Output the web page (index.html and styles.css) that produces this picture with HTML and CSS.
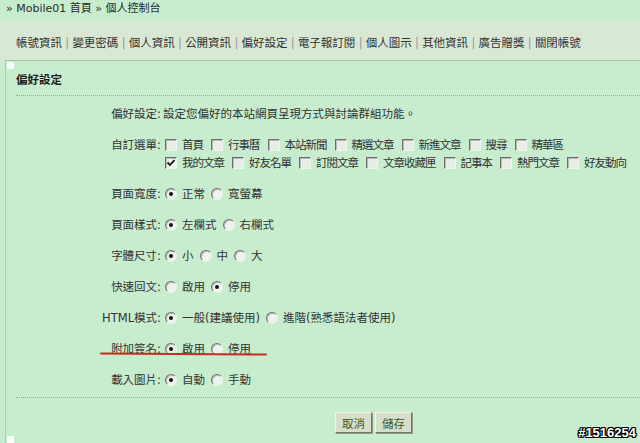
FILE: index.html
```html
<!DOCTYPE html>
<html lang="zh-Hant">
<head>
<meta charset="utf-8">
<title>偏好設定</title>
<link rel="stylesheet" href="styles.css">
</head>
<body>
<div class="crumb">» Mobile01 首頁 » 個人控制台</div>
<nav class="tabs">
  <a>帳號資訊</a><span class="sep">|</span><a>變更密碼</a><span class="sep">|</span><a>個人資訊</a><span class="sep">|</span><a>公開資訊</a><span class="sep">|</span><a>偏好設定</a><span class="sep">|</span><a>電子報訂閱</a><span class="sep">|</span><a>個人圖示</a><span class="sep">|</span><a>其他資訊</a><span class="sep">|</span><a>廣告贈獎</a><span class="sep">|</span><a>關閉帳號</a>
</nav>
<section class="panel">
  <span class="corner tl"></span>
  <span class="corner bl"></span>
  <h2 class="title">偏好設定</h2>
  <div class="form">
    <div class="row"><div class="lbl">偏好設定:</div><div class="val desc">設定您偏好的本站網頁呈現方式與討論群組功能。</div></div>
    <div class="row"><div class="lbl">自訂選單:</div><div class="val">
        <div class="line checks">
          <span class="opt"><span class="cb"></span>首頁</span>
          <span class="opt"><span class="cb"></span>行事曆</span>
          <span class="opt"><span class="cb"></span>本站新聞</span>
          <span class="opt"><span class="cb"></span>精選文章</span>
          <span class="opt"><span class="cb"></span>新進文章</span>
          <span class="opt"><span class="cb"></span>搜尋</span>
          <span class="opt"><span class="cb"></span>精華區</span>
        </div>
        <div class="line checks">
          <span class="opt"><span class="cb on"><svg viewBox="0 0 10 10"><path d="M1.5 4.5 L4 7 L8.5 2.2" /></svg></span>我的文章</span>
          <span class="opt"><span class="cb"></span>好友名單</span>
          <span class="opt"><span class="cb"></span>訂閱文章</span>
          <span class="opt"><span class="cb"></span>文章收藏匣</span>
          <span class="opt"><span class="cb"></span>記事本</span>
          <span class="opt"><span class="cb"></span>熱門文章</span>
          <span class="opt"><span class="cb"></span>好友動向</span>
        </div>
    </div></div>
    <div class="row"><div class="lbl">頁面寬度:</div><div class="val"><div class="line">
        <span class="opt"><span class="rd on"></span>正常</span>
        <span class="opt"><span class="rd"></span>寬螢幕</span>
    </div></div></div>
    <div class="row"><div class="lbl">頁面樣式:</div><div class="val"><div class="line">
        <span class="opt"><span class="rd on"></span>左欄式</span>
        <span class="opt"><span class="rd"></span>右欄式</span>
    </div></div></div>
    <div class="row"><div class="lbl">字體尺寸:</div><div class="val"><div class="line">
        <span class="opt"><span class="rd on"></span>小</span>
        <span class="opt"><span class="rd"></span>中</span>
        <span class="opt"><span class="rd"></span>大</span>
    </div></div></div>
    <div class="row"><div class="lbl">快速回文:</div><div class="val"><div class="line">
        <span class="opt"><span class="rd"></span>啟用</span>
        <span class="opt"><span class="rd on"></span>停用</span>
    </div></div></div>
    <div class="row"><div class="lbl">HTML模式:</div><div class="val"><div class="line">
        <span class="opt"><span class="rd on"></span>一般(建議使用)</span>
        <span class="opt"><span class="rd"></span>進階(熟悉語法者使用)</span>
    </div></div></div>
    <div class="row"><div class="lbl">附加簽名:</div><div class="val"><div class="line">
        <span class="opt"><span class="rd on"></span>啟用</span>
        <span class="opt"><span class="rd"></span>停用</span>
    </div></div></div>
    <div class="row last"><div class="lbl">載入圖片:</div><div class="val"><div class="line">
        <span class="opt"><span class="rd on"></span>自動</span>
        <span class="opt"><span class="rd"></span>手動</span>
    </div></div></div>
  </div>
  <div class="actions">
    <button class="btn" type="button">取消</button>
    <button class="btn" type="button">儲存</button>
  </div>
</section>
<div class="redline"></div>
<div class="mark">#1516254</div>
</body>
</html>
```
FILE: styles.css
```css
html, body {
  margin: 0;
  padding: 0;
}
body {
  background: #c7ecce;
  font-family: "DejaVu Sans", "Noto Sans CJK TC", sans-serif;
  font-size: 11.5px;
  color: #333;
  position: relative;
  height: 443px;
  overflow: hidden;
}
.crumb {
  height: 20px;
  line-height: 18px;
  padding-left: 6px;
  font-size: 11px;
  color: #2c2c2c;
}
.tabs {
  background: #d9e8d5;
  height: 40px;
  box-sizing: border-box;
  padding: 14px 0 0 16px;
  display: flex;
  gap: 3.25px;
  line-height: 18px;
}
.tabs a {
  color: #333;
}
.tabs .sep {
  color: #9a9a9a;
}
.panel {
  position: relative;
  margin-left: 5px;
  border-left: 1px solid #a8cfae;
  border-top: 1px solid #9fc7a6;
  padding-left: 10px;
  height: 400px;
}
.corner {
  position: absolute;
  left: 1px;
  width: 7px;
  height: 7px;
  background: #fbfdfb;
}
.corner.tl { top: 1px; }
.corner.bl { top: 375px; }
.title {
  margin: 0;
  font-size: 11.5px;
  font-weight: bold;
  line-height: 18px;
  padding: 10px 0 6px;
  color: #1e1e1e;
  border-bottom: 1px dotted #97ad9a;
}
.form {
  padding-top: 2px;
  border-bottom: 1px dotted #97ad9a;
}
.row {
  display: flex;
  align-items: flex-start;
  padding: 7px 0 6px;
  line-height: 18px;
  white-space: nowrap;
}
.row.last {
  padding-bottom: 8px;
}
.lbl {
  flex: 0 0 145px;
  text-align: right;
  color: #333;
}
.val {
  padding-left: 4px;
}
.val.desc {
  padding-left: 2px;
}
.line {
  display: flex;
  align-items: center;
  height: 18px;
}
.opt {
  display: inline-flex;
  align-items: center;
  margin-right: 6px;
}
.checks .opt {
  letter-spacing: -1px;
  margin-right: 8px;
}
.cb {
  display: inline-block;
  box-sizing: border-box;
  width: 12px;
  height: 12px;
  margin-right: 5px;
  border: 1px solid;
  border-color: #6e6e6e #f2f4f2 #f2f4f2 #6e6e6e;
  box-shadow: inset 1px 1px 0 #b4bab4;
  background: #e8eee6;
  position: relative;
}
.cb.on {
  background: #f4f6f3;
}
.cb svg {
  position: absolute;
  left: 0;
  top: 0;
  width: 10px;
  height: 10px;
}
.cb svg path {
  fill: none;
  stroke: #111;
  stroke-width: 1.8;
}
.rd {
  display: inline-block;
  box-sizing: border-box;
  width: 12px;
  height: 12px;
  margin-right: 5px;
  border-radius: 50%;
  border: 1px solid;
  border-color: #707070 #eef1ee #eef1ee #707070;
  box-shadow: inset 1px 1px 0 #b8beb8;
  background: #eef3ed;
  position: relative;
}
.rd.on::after {
  content: "";
  position: absolute;
  left: 3px;
  top: 3px;
  width: 4px;
  height: 4px;
  border-radius: 50%;
  background: #111;
}
.actions {
  padding: 14px 0 0 319px;
  display: flex;
  gap: 3px;
}
.btn {
  width: 37px;
  height: 21px;
  padding: 0;
  font-family: "Noto Sans CJK TC", sans-serif;
  font-size: 11.5px;
  color: #3a5a18;
  background: #d7dfcc;
  border: 1px solid;
  border-color: #f2f5ee #6f7a66 #6f7a66 #f2f5ee;
  box-shadow: 1px 1px 0 #8e9886;
}
.redline {
  position: absolute;
  left: 100px;
  top: 353px;
  width: 167px;
  height: 2px;
  background: #c92a22;
  border-radius: 1px;
  transform: rotate(0.35deg);
}
.mark {
  position: absolute;
  right: 4px;
  top: 426px;
  font-family: "Liberation Sans", sans-serif;
  font-weight: bold;
  font-size: 13px;
  line-height: 14px;
  color: #fff;
  text-shadow: 1px 0 0 #000, -1px 0 0 #000, 0 1px 0 #000, 0 -1px 0 #000,
    1px 1px 0 #000, -1px -1px 0 #000, 1px -1px 0 #000, -1px 1px 0 #000;
}
```
